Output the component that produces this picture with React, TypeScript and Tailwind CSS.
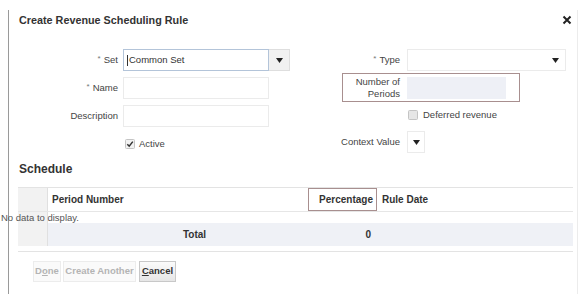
import React from "react";

const Caret = () => (
  <svg width="7" height="5" viewBox="0 0 7 5">
    <path d="M0 0 L7 0 L3.5 5 Z" fill="#222" />
  </svg>
);

const Req = ({ text }: { text: string }) => (
  <span>
    <span className="text-[8px] text-[#777] align-top mr-[3px]">*</span>
    {text}
  </span>
);

const CheckBox = ({ checked }: { checked?: boolean }) => (
  <svg width="10" height="10" viewBox="0 0 10 10">
    <rect x="0.5" y="0.5" width="9" height="9" rx="1" fill={checked ? "#f2f2f2" : "#e6e6e6"} stroke="#c4c4c4" />
    {checked && <path d="M2.3 5.2 L4.2 7.2 L7.8 2.6" stroke="#333" strokeWidth="1.5" fill="none" />}
  </svg>
);

const App = () => {
  return (
    <div className="w-[584px] h-[294px] bg-white overflow-hidden font-['Liberation_Sans',Arial,sans-serif] text-[9.5px] text-[#444] whitespace-nowrap">
      <div className="ml-[8px] mt-[10px] w-[570px] h-[284px] border-l border-l-[#9a9a9a] border-r border-r-[#ececec] pl-[10px]">
        {/* title */}
        <div className="h-[20px] flex items-center justify-between pr-[5px]">
          <span className="text-[10.8px] font-bold text-[#333]">Create Revenue Scheduling Rule</span>
          <svg width="10" height="10" viewBox="0 0 10 10">
            <path d="M1.5 1.5 L8.5 8.5 M8.5 1.5 L1.5 8.5" stroke="#222" strokeWidth="2" />
          </svg>
        </div>

        {/* form */}
        <div className="mt-[19px] flex gap-[10px]">
          <div className="w-[271px] grid grid-cols-[99px_167px] gap-x-[5px] gap-y-[6px] auto-rows-[22px]">
            <div className="flex items-center justify-end"><Req text="Set" /></div>
            <div className="flex">
              <div className="w-[146px] h-[22px] border border-[#b3c4d9] flex items-center pl-[3px] text-[#333]">
                <span className="w-px h-[11px] bg-[#333] mr-px" />
                Common Set
              </div>
              <div className="w-[21px] h-[22px] bg-[#f1f1f1] border border-l-0 border-[#dedede] flex items-center justify-center">
                <Caret />
              </div>
            </div>

            <div className="flex items-center justify-end"><Req text="Name" /></div>
            <div className="w-[146px] h-[22px] border border-[#ebebeb]" />

            <div className="flex items-center justify-end">Description</div>
            <div className="w-[146px] h-[22px] border border-[#ebebeb]" />

            <div />
            <div className="flex items-center gap-[4px] pl-[2px]">
              <CheckBox checked />
              <span>Active</span>
            </div>
          </div>

          <div className="w-[266px] flex flex-col">
            <div className="h-[22px] flex items-center">
              <div className="w-[100px] text-right"><Req text="Type" /></div>
              <div className="ml-[7px] w-[159px] h-[22px] border border-[#ebebeb] flex items-center justify-end pr-[6px]">
                <Caret />
              </div>
            </div>

            <div className="mt-[2px] ml-[42px] w-[178px] h-[29px] border border-[#a88f8f] flex items-center">
              <div className="w-[57px] text-right leading-[12px]">
                Number of
                <br />
                Periods
              </div>
              <div className="ml-[7px] w-[99px] h-[22px] bg-[#eef0f6]" />
            </div>

            <div className="mt-[2px] h-[22px] flex items-center pl-[108px] gap-[5px]">
              <CheckBox />
              <span>Deferred revenue</span>
            </div>

            <div className="mt-[5px] h-[22px] flex items-center">
              <div className="w-[100px] text-right">Context Value</div>
              <div className="ml-[7px] w-[18px] h-[22px] border border-[#ebebeb] flex items-center justify-center">
                <Caret />
              </div>
            </div>
          </div>
        </div>

        {/* schedule */}
        <div className="mt-[6px] h-[16px] flex items-center text-[12px] font-bold text-[#333]">Schedule</div>

        <div className="mt-[10px] -ml-px w-[555px] border-t border-[#e3e3e3]">
          <div className="flex h-[24px] border-b border-[#e6e6e6] text-[10px] font-bold text-[#333]">
            <div className="w-[30px] bg-[#f2f2f2] border-r border-[#e0e0e0]" />
            <div className="w-[260px] pl-[4px] flex items-center">Period Number</div>
            <div className="w-[69px] border border-[#a88f8f] flex items-center justify-end pr-[3px]">Percentage</div>
            <div className="flex-1 pl-[5px] flex items-center">Rule Date</div>
          </div>
          <div className="relative flex h-[11px]">
            <div className="w-[30px] bg-[#f2f2f2] border-r border-[#e0e0e0]" />
            <span className="absolute left-[-17px] top-0 leading-[11px] text-[#555]">No data to display.</span>
          </div>
          <div className="flex h-[23px] text-[10px] font-bold text-[#333]">
            <div className="w-[30px] bg-[#f2f2f2] border-r border-[#e0e0e0]" />
            <div className="w-[260px] bg-[#eff1f6] flex items-center pl-[135px]">Total</div>
            <div className="w-[69px] bg-[#eff1f6] flex items-center justify-end pr-[6px]">0</div>
            <div className="flex-1 bg-[#eff1f6]" />
          </div>
          <div className="h-[6px] border-b border-[#e3e3e3]" />
        </div>

        {/* buttons */}
        <div className="mt-[9px] pl-[14px] flex gap-[2px] font-bold">
          <div className="h-[21px] w-[28px] border border-[#ececec] bg-[#fafafa] text-[#b4b4b4] flex items-center justify-center">
            D<span className="underline">o</span>ne
          </div>
          <div className="h-[21px] w-[73px] border border-[#ececec] bg-[#fafafa] text-[#b4b4b4] flex items-center justify-center">
            Create Another
          </div>
          <div className="ml-[1px] h-[21px] w-[37px] border border-[#c8c8c8] bg-gradient-to-b from-[#fbfbfb] to-[#e6e6e6] text-[#333] flex items-center justify-center">
            <span className="underline">C</span>ancel
          </div>
        </div>
      </div>
    </div>
  );
};

export default App;
